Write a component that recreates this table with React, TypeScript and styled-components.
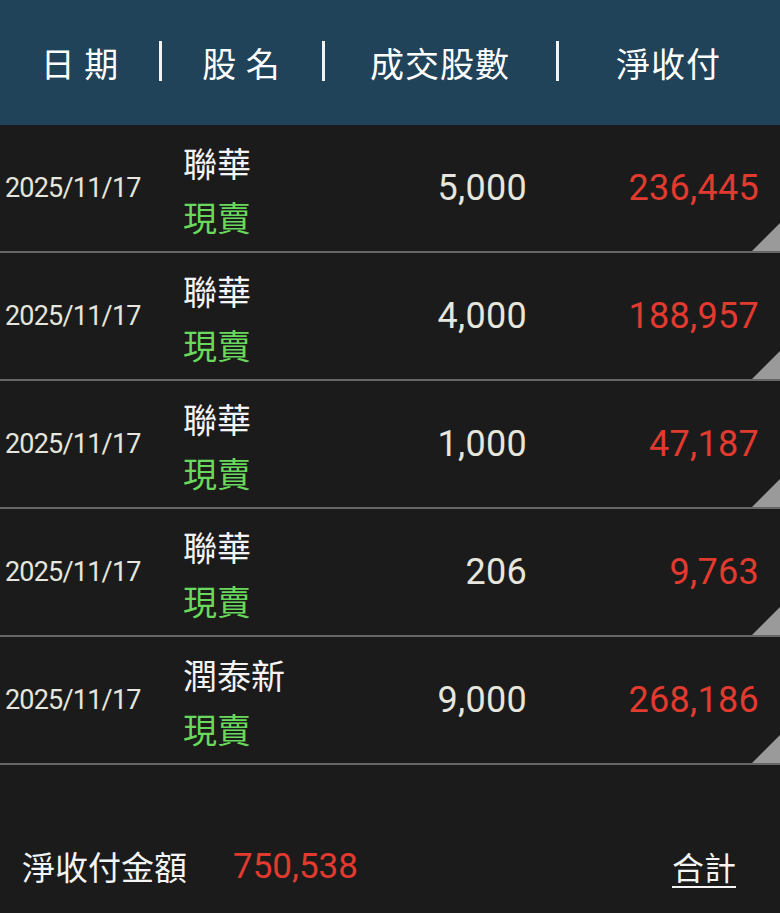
import React from "react";
import styled, { createGlobalStyle } from "styled-components";

type Trade = {
  date: string;
  name: string;
  action: string;
  qty: string;
  net: string;
};

const trades: Trade[] = [
  { date: "2025/11/17", name: "聯華", action: "現賣", qty: "5,000", net: "236,445" },
  { date: "2025/11/17", name: "聯華", action: "現賣", qty: "4,000", net: "188,957" },
  { date: "2025/11/17", name: "聯華", action: "現賣", qty: "1,000", net: "47,187" },
  { date: "2025/11/17", name: "聯華", action: "現賣", qty: "206", net: "9,763" },
  { date: "2025/11/17", name: "潤泰新", action: "現賣", qty: "9,000", net: "268,186" },
];

const GlobalStyle = createGlobalStyle`
  html, body {
    margin: 0;
    padding: 0;
    background: #1b1b1b;
  }
  body {
    font-family: Roboto, "Noto Sans CJK TC", sans-serif;
    color: #ecece6;
  }
  * { box-sizing: border-box; }
`;

const Page = styled.div`
  width: 780px;
  min-height: 913px;
  background: #1b1b1b;
  display: flex;
  flex-direction: column;
`;

const Header = styled.div`
  height: 125px;
  background: #21435a;
  display: grid;
  grid-template-columns: 160px 163px 234px 223px;
  align-items: center;
`;

const HeadCell = styled.div<{ $divider?: boolean }>`
  position: relative;
  text-align: center;
  font-family: "Noto Sans CJK TC", sans-serif;
  font-size: 34px;
  color: #ffffff;
  line-height: 40px;
  letter-spacing: 1px;
  ${(p) =>
    p.$divider &&
    `
    &::before {
      content: "";
      position: absolute;
      left: -1px;
      top: -2px;
      width: 3px;
      height: 40px;
      background: #f2f2f2;
    }
  `}
`;

const Row = styled.div`
  position: relative;
  height: 128px;
  border-bottom: 2px solid #666666;
  display: grid;
  grid-template-columns: 178px 150px 194px 232px;
  padding: 0 21px 0 5px;
  align-items: center;
`;

const DateCell = styled.div`
  font-size: 27px;
  letter-spacing: -0.8px;
  color: #e6e6de;
`;

const NameCell = styled.div`
  display: flex;
  flex-direction: column;
  margin-top: 3px;
  font-family: "Noto Sans CJK TC", sans-serif;
  font-size: 34px;
  line-height: 54px;
`;

const StockName = styled.span`
  color: #f4f4f4;
`;

const Action = styled.span`
  color: #68d95c;
`;

const Num = styled.div<{ $red?: boolean }>`
  text-align: right;
  font-size: 36px;
  letter-spacing: 0.3px;
  color: ${(p) => (p.$red ? "#e23a2f" : "#e6e6de")};
`;

const Corner = styled.div`
  position: absolute;
  right: 0;
  bottom: 0;
  width: 0;
  height: 0;
  border-style: solid;
  border-width: 0 0 28px 28px;
  border-color: transparent transparent #9a9a9a transparent;
`;

const Footer = styled.div`
  margin-top: 65px;
  height: 72px;
  display: flex;
  align-items: center;
  padding: 0 44px 0 22px;
`;

const TotalLabel = styled.span`
  font-family: "Noto Sans CJK TC", sans-serif;
  font-size: 33px;
  color: #f4f4f4;
`;

const TotalValue = styled.span`
  margin-left: 46px;
  font-size: 35px;
  color: #e23a2f;
`;

const SumLink = styled.span`
  margin-left: auto;
  font-family: "Noto Sans CJK TC", sans-serif;
  font-size: 32px;
  color: #f4f4f4;
  text-decoration: underline;
  text-decoration-thickness: 2px;
  text-underline-offset: 6px;
`;

export default function App() {
  return (
    <Page>
      <GlobalStyle />
      <Header>
        <HeadCell>日 期</HeadCell>
        <HeadCell $divider>股 名</HeadCell>
        <HeadCell $divider>成交股數</HeadCell>
        <HeadCell $divider>淨收付</HeadCell>
      </Header>
      {trades.map((t, idx) => (
        <Row key={idx}>
          <DateCell>{t.date}</DateCell>
          <NameCell>
            <StockName>{t.name}</StockName>
            <Action>{t.action}</Action>
          </NameCell>
          <Num>{t.qty}</Num>
          <Num $red>{t.net}</Num>
          <Corner />
        </Row>
      ))}
      <Footer>
        <TotalLabel>淨收付金額</TotalLabel>
        <TotalValue>750,538</TotalValue>
        <SumLink>合計</SumLink>
      </Footer>
    </Page>
  );
}
